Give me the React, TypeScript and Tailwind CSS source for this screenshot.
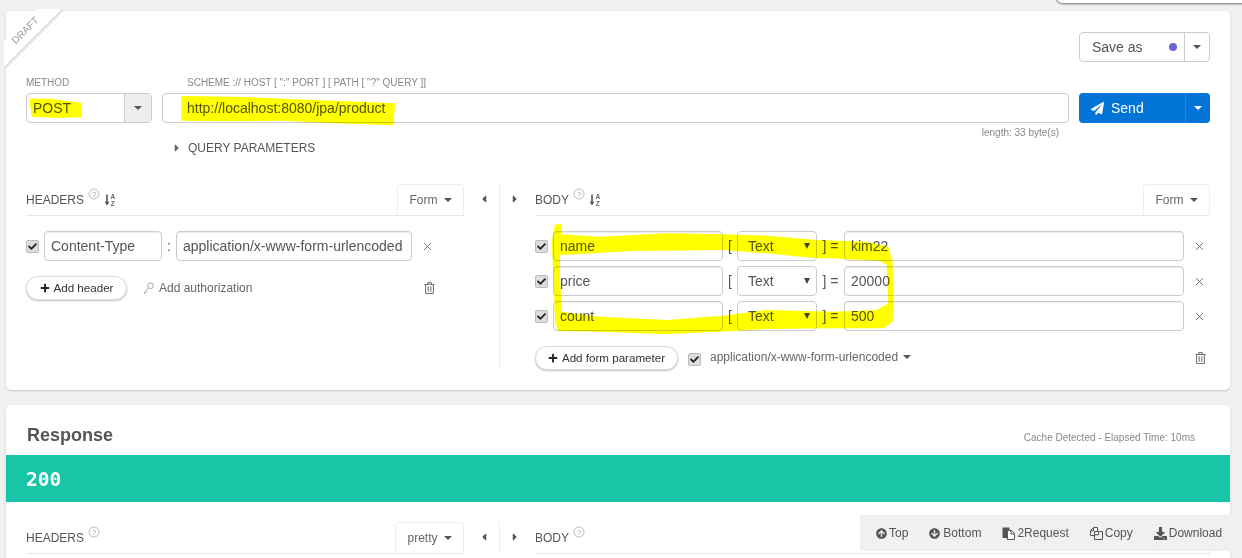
import React from "react";
import { FaPaperPlane, FaPlus, FaCheck, FaRegTrashAlt, FaArrowCircleUp, FaArrowCircleDown, FaDownload, FaCaretLeft, FaCaretRight } from "react-icons/fa";

const Caret = ({ c = "dark" }: { c?: string }) => (
  <span className={`inline-block w-0 h-0 border-x-[4px] border-x-transparent border-t-[4px] ${c === "white" ? "border-t-white" : "border-t-[#555]"}`} />
);

const Check = () => (
  <span className="w-[13px] h-[13px] shrink-0 rounded-[2px] border border-[#bbb] bg-[#ddd] flex items-center justify-center text-[#222]">
    <FaCheck className="w-[9px] h-[9px]" />
  </span>
);

const Input = ({ w, children }: { w: string; children: React.ReactNode }) => (
  <div className={`${w} h-[30px] shrink-0 rounded-[4px] border border-[#ccc] shadow-[inset_0_1px_1px_rgba(0,0,0,0.08)] px-[6px] flex items-center text-[14px] text-[#555] whitespace-nowrap overflow-hidden`}>
    {children}
  </div>
);

const Help = () => (
  <svg width="12" height="12" viewBox="0 0 12 12" className="mb-[12px] ml-[4px]">
    <circle cx="6" cy="6" r="5" fill="none" stroke="#aaa" strokeWidth="0.8" />
    <text x="6" y="8.6" textAnchor="middle" fontSize="7.5" fill="#999" fontFamily="Liberation Sans">?</text>
  </svg>
);

const Sort = () => (
  <svg width="12" height="14" viewBox="0 0 12 14" className="ml-[4px] mt-[1px]">
    <path d="M3 1.5v8.5" fill="none" stroke="#555" strokeWidth="1.6" />
    <path d="M0.6 8.8h4.8L3 12.6z" fill="#555" />
    <text x="8.8" y="6" textAnchor="middle" fontSize="6.5" fontWeight="700" fill="#666" fontFamily="Liberation Sans">A</text>
    <text x="8.8" y="13" textAnchor="middle" fontSize="6.5" fontWeight="700" fill="#666" fontFamily="Liberation Sans">Z</text>
  </svg>
);

const Tab = ({ w, label }: { w: string; label: string }) => (
  <div className={`${w} h-[31px] rounded-t-[4px] border border-[#eee] border-b-0 flex items-center justify-center gap-[6px] text-[12px] text-[#666] bg-white`}>
    {label}
    <Caret />
  </div>
);

const PaneHead = ({ w, title, tab, sort = true }: { w: string; title: string; tab: React.ReactNode; sort?: boolean }) => (
  <div className={`${w} h-[32px] border-b border-[#e8e8e8] flex items-center justify-between`}>
    <div className="flex items-center text-[12px] text-[#555] h-[30px]">
      {title}
      <Help />
      {sort && <Sort />}
    </div>
    {tab}
  </div>
);

const Pill = ({ w, label }: { w: string; label: string }) => (
  <div className={`${w} h-[24px] shrink-0 rounded-full border border-[#ddd] bg-white shadow-[0_1px_2px_rgba(0,0,0,0.25)] flex items-center justify-center gap-[4px] text-[11.6px] text-[#333]`}>
    <FaPlus className="w-[10px] h-[10px] text-[#222]" />
    {label}
  </div>
);

const X = () => (
  <svg width="9" height="9" viewBox="0 0 9 9" fill="none" stroke="#666" strokeWidth="0.9">
    <path d="M1 1l7 7M8 1l-7 7" />
  </svg>
);
const Trash = () => <FaRegTrashAlt className="w-[11px] h-[12px] text-[#777]" />;

const BodyRow = ({ name, value }: { name: string; value: string }) => (
  <div className="flex items-center h-[30px]">
    <Check />
    <div className="w-[5px]" />
    <Input w="w-[170px]">{name}</Input>
    <span className="w-[14px] text-center text-[14px] text-[#555]">[</span>
    <div className="w-[80px] h-[30px] shrink-0 rounded-[4px] border border-[#ccc] flex items-center justify-between pl-[10px] pr-[6px] text-[14px] text-[#555]">
      Text
      <span className="w-0 h-0 border-x-[3px] border-x-transparent border-t-[6px] border-t-[#444]" />
    </div>
    <span className="w-[27px] text-center text-[14px] text-[#555]">] =</span>
    <Input w="w-[340px]">{value}</Input>
    <div className="w-[30px] flex justify-center"><X /></div>
  </div>
);

const Tool = ({ icon, label, gap }: { icon: React.ReactNode; label: string; gap: string }) => (
  <div className={`flex items-center ${gap} text-[12px] text-[#555]`}>
    {icon}
    {label}
  </div>
);

const LeftArrow = () => <FaCaretLeft className="w-[10px] h-[12px] text-[#555]" />;
const RightArrow = () => <FaCaretRight className="w-[10px] h-[12px] text-[#555]" />;

export default function App() {
  return (
    <div className="relative w-[1242px] h-[558px] overflow-hidden bg-[#f0f0f0] font-['Liberation_Sans',Arial,sans-serif] pt-[11px] px-[6px]">
      {/* window corner at top right */}
      <div className="absolute left-[1055px] -top-[20px] w-[220px] h-[24px] bg-white rounded-[8px] border border-[#999] shadow-[0_1px_1px_rgba(0,0,0,0.2)]" />

      {/* Request card */}
      <div className="relative w-[1224px] h-[379px] rounded-[5px] bg-white shadow-[0_1px_2px_rgba(0,0,0,0.18)] pt-[21px] px-[20px]">
        <div className="flex justify-end">
          <div className="w-[131px] h-[30px] rounded-[4px] border border-[#ccc] flex text-[14px] text-[#555]">
            <div className="flex-1 flex items-center justify-between pl-[12px] pr-[7px] border-r border-[#ccc]">
              Save as
              <span className="w-[8px] h-[8px] rounded-full bg-[#6a67ce]" />
            </div>
            <div className="w-[24px] flex items-center justify-center"><Caret /></div>
          </div>
        </div>

        <div className="flex mt-[14px] h-[12px] items-center text-[10px] text-[#888]">
          <span className="w-[161px]">METHOD</span>
          <span>SCHEME :// HOST [ ":" PORT ] [ PATH [ "?" QUERY ]]</span>
        </div>

        <div className="flex mt-[5px]">
          <div className="w-[126px] h-[30px] rounded-[4px] border border-[#ccc] flex text-[14px] text-[#555] overflow-hidden">
            <div className="flex-1 flex items-center pl-[6px]">POST</div>
            <div className="w-[27px] bg-[#eee] border-l border-[#ccc] flex items-center justify-center"><Caret /></div>
          </div>
          <div className="ml-[10px] w-[907px] h-[30px] rounded-[4px] border border-[#ccc] flex items-center pl-[24px] text-[14px] text-[#555]">
            http://localhost:8080/jpa/product
          </div>
          <div className="ml-[10px] w-[131px] h-[30px] rounded-[4px] bg-[#0274d8] flex text-[14px] text-white">
            <div className="flex-1 flex items-center pl-[12px] gap-[7px] border-r border-[#2a86dc]">
              <FaPaperPlane className="w-[13px] h-[13px]" />
              <span>Send</span>
            </div>
            <div className="w-[24px] flex items-center justify-center"><Caret c="white" /></div>
          </div>
        </div>

        <div className="mt-[3px] h-[12px] flex items-center justify-end pr-[151px] text-[10px] text-[#888]">length: 33 byte(s)</div>

        <div className="mt-[2px] h-[16px] ml-[146px] flex items-center text-[12px] text-[#555]">
          <FaCaretRight className="w-[10px] h-[12px] text-[#666] mr-[6px]" />
          QUERY PARAMETERS
        </div>

        <div className="flex mt-[28px] h-[186px]">
          {/* Headers pane */}
          <div className="w-[474px] shrink-0 border-r border-[#eee] flex flex-col">
            <div className="flex">
              <PaneHead w="w-[438px]" title="HEADERS" tab={<Tab w="w-[67px]" label="Form" />} />
              <div className="flex-1 flex items-center justify-center pl-[5px] h-[30px]"><LeftArrow /></div>
            </div>
            <div className="mt-[15px] flex items-center h-[30px]">
              <Check />
              <div className="w-[5px]" />
              <Input w="w-[118px]">Content-Type</Input>
              <span className="w-[14px] text-center text-[14px] text-[#555]">:</span>
              <Input w="w-[236px]">application/x-www-form-urlencoded</Input>
              <div className="w-[31px] flex justify-center"><X /></div>
            </div>
            <div className="mt-[15px] flex items-center w-[409px]">
              <Pill w="w-[101px]" label="Add header" />
              <div className="ml-[16px] flex items-center gap-[5px] text-[12px] text-[#666]">
                <svg width="11" height="13" viewBox="0 0 11 13" fill="none" stroke="#999" strokeWidth="0.9">
                  <circle cx="7.5" cy="3.8" r="2.8" />
                  <path d="M5.5 6L1 11M1.2 10.8l1.5 1.4M2.6 9.4l1.3 1.3" />
                </svg>
                Add authorization
              </div>
              <div className="ml-auto"><Trash /></div>
            </div>
          </div>

          {/* Body pane */}
          <div className="flex-1 flex flex-col">
            <div className="flex">
              <div className="w-[35px] h-[30px] flex items-center justify-center pr-[6px]"><RightArrow /></div>
              <PaneHead w="w-[675px]" title="BODY" tab={<Tab w="w-[67px]" label="Form" />} />
            </div>
            <div className="mt-[15px] ml-[35px] flex flex-col gap-[5px]">
              <BodyRow name="name" value="kim22" />
              <BodyRow name="price" value="20000" />
              <BodyRow name="count" value="500" />
            </div>
            <div className="mt-[15px] ml-[35px] flex items-center w-[675px] h-[24px]">
              <Pill w="w-[143px]" label="Add form parameter" />
              <div className="ml-[10px] mt-[2px]"><Check /></div>
              <div className="ml-[9px] mb-[2px] flex items-center gap-[5px] text-[12px] text-[#666]">
                application/x-www-form-urlencoded
                <Caret />
              </div>
              <div className="ml-auto mr-[4px]"><Trash /></div>
            </div>
          </div>
        </div>
      </div>

      {/* Response card */}
      <div className="relative w-[1224px] h-[170px] mt-[15px] rounded-t-[5px] bg-white shadow-[0_1px_2px_rgba(0,0,0,0.18)]">
        <div className="h-[50px] flex items-center justify-between pl-[21px] pr-[35px] pt-[10px]">
          <span className="text-[18px] font-bold text-[#555]">Response</span>
          <span className="text-[10px] text-[#888] pt-[4px]">Cache Detected - Elapsed Time: 10ms</span>
        </div>
        <div className="h-[47px] bg-[#18c5a6] flex items-center pl-[20px] pt-[2px] font-['DejaVu_Sans_Mono',monospace] font-bold text-[19.5px] text-white">200</div>
        <div className="flex mt-[20px] px-[20px]">
          <div className="w-[474px] shrink-0 border-r border-[#eee] flex">
            <PaneHead w="w-[438px]" title="HEADERS" sort={false} tab={<Tab w="w-[69px]" label="pretty" />} />
            <div className="flex-1 flex items-center justify-center pl-[5px] h-[30px]"><LeftArrow /></div>
          </div>
          <div className="w-[35px] h-[30px] flex items-center justify-center pr-[6px]"><RightArrow /></div>
          <PaneHead w="w-[675px]" title="BODY" sort={false} tab={<Tab w="w-[58px]" label="" />} />
        </div>
      </div>

      {/* Floating response toolbar */}
      <div className="absolute left-[860px] top-[515px] w-[372px] h-[36px] bg-[#f0f0f0] flex items-center pl-[16px] gap-[21px]">
        <Tool gap="gap-[2px]" icon={<FaArrowCircleUp className="w-[11px] h-[11px] text-[#555]" />} label="Top" />
        <Tool gap="gap-[3px]" icon={<FaArrowCircleDown className="w-[11px] h-[11px] text-[#555]" />} label="Bottom" />
        <Tool gap="gap-[2px]" icon={
          <svg width="13" height="13" viewBox="0 0 13 13">
            <path d="M0.5 0.5h7v2.5H5v8H0.5z" fill="#555" />
            <path d="M5.5 3.5h4l3 3v6h-7z" fill="#fff" stroke="#555" strokeWidth="1" />
            <path d="M9 3.5v3.5h3.5" fill="none" stroke="#555" strokeWidth="1" />
          </svg>
        } label="2Request" />
        <Tool gap="gap-[2px]" icon={
          <svg width="13" height="13" viewBox="0 0 13 13" fill="none" stroke="#555" strokeWidth="1">
            <path d="M4 8.5H0.5V3.5L3.5 0.5H7.5V4" />
            <path d="M4.5 4.5h4l4 0v8h-8z" />
            <path d="M3.5 0.8v3H0.7M8.5 4.8v3H5" />
          </svg>
        } label="Copy" />
        <Tool gap="gap-[2px]" icon={<FaDownload className="w-[13px] h-[13px] text-[#555]" />} label="Download" />
      </div>

      {/* DRAFT corner ribbon */}
      <svg className="absolute left-0 top-0" width="70" height="72" viewBox="0 0 70 72">
        <polygon points="62,9 4,67 4,42 37,9" fill="#fff" />
        <path d="M63 9.5L5 67.5" stroke="#e2e2e2" strokeWidth="2.5" />
      </svg>
      <span className="absolute left-[9px] top-[24px] w-[30px] text-center -rotate-45 text-[10px] text-[#999]">DRAFT</span>

      {/* Yellow marker strokes */}
      <svg className="absolute inset-0 mix-blend-multiply pointer-events-none" width="1242" height="558" viewBox="0 0 1242 558">
        <g transform="scale(0.33333)" fill="#ffff00">
          <polygon points="88,296 150,296 244,308 246,352 170,354 95,350" />
          <polygon points="544,288 700,290 850,296 1000,302 1185,310 1180,376 1000,370 850,362 700,364 544,362" />
        </g>
        <g transform="translate(500 175) scale(0.33333)" fill="#ffff00">
          <path d="M165 148L186 148L184 178L300 185L500 175L670 178L800 182L950 195L1100 200L1165 215L1178 260L1180 380L1178 440L1150 460L1000 460L800 462L700 468L500 478L300 470L175 468L165 440L160 300L155 200ZM180 240L180 300L185 410L300 425L500 435L670 422L800 405L1000 410L1130 405L1165 385L1160 270L1140 258L1000 250L950 250L800 235L670 225L400 228Z" fillRule="evenodd" />
        </g>
      </svg>
    </div>
  );
}
